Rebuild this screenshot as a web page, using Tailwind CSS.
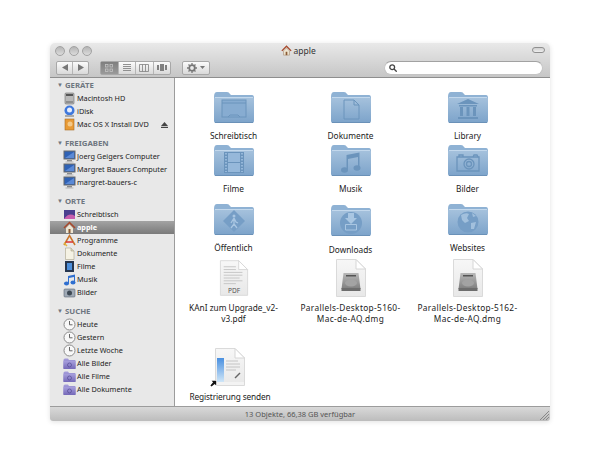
<!DOCTYPE html>
<html lang="de">
<head>
  <meta charset="UTF-8" />
  <title>apple</title>
  <script src="https://cdn.jsdelivr.net/npm/@tailwindcss/browser@4"></script>
</head>
<body class="bg-white w-[600px] h-[465px] overflow-hidden pt-[43px] pl-[50px] font-['Noto_Sans',sans-serif] text-[7.300px] text-[#222] leading-[11px] whitespace-nowrap">

  <!-- shared icon parts -->
  <svg class="absolute w-0 h-0">
    <defs>
      <linearGradient id="fb" x1="0" y1="0" x2="0" y2="1"><stop offset="0" stop-color="#a6c2dd"/><stop offset="1" stop-color="#7ca3ca"/></linearGradient>
      <linearGradient id="pg" x1="0" y1="0" x2="0" y2="1"><stop offset="0" stop-color="#f7f7f7"/><stop offset="1" stop-color="#e8e8e8"/></linearGradient>
      <linearGradient id="dr" x1="0" y1="0" x2="0" y2="1"><stop offset="0" stop-color="#b8b8b8"/><stop offset="1" stop-color="#7f7f7f"/></linearGradient>
      <linearGradient id="sf" x1="0" y1="0" x2="0" y2="1"><stop offset="0" stop-color="#a79fdc"/><stop offset="1" stop-color="#7468b8"/></linearGradient>
      <linearGradient id="bl" x1="0" y1="0" x2="0" y2="1"><stop offset="0" stop-color="#4a90e0"/><stop offset="1" stop-color="#cfe6f8"/></linearGradient>
      <symbol id="folder" viewBox="0 0 42 33">
        <path d="M1 6Q1 1 4 1H14Q16 1 17 3L18 4H39Q41 4 41 7V12H1Z" fill="#8fb2d4"/>
        <path d="M1 8Q1 6 3 6H39Q41 6 41 8V30Q41 32 39 32H3Q1 32 1 30Z" fill="url(#fb)"/>
        <path d="M2 6.500H40" stroke="#c3d8ec" stroke-width="1"/>
        <path d="M2 31.500H40" stroke="#6a91b8" stroke-width="1"/>
      </symbol>
      <symbol id="page" viewBox="0 0 32 40">
        <path d="M1.500 1.500H21L30.500 11V38.500H1.500Z" fill="url(#pg)" stroke="#dadada"/>
        <path d="M21 1.500V11H30.500Z" fill="#fff" stroke="#d6d6d6"/>
      </symbol>
      <symbol id="disk" viewBox="0 0 32 40">
        <use href="#page" width="32" height="40"/>
        <path d="M8.500 15H23.500L25.500 31H6.500Z" fill="url(#dr)"/>
        <rect x="6.500" y="30" width="19" height="3" fill="#6d6d6d"/>
        <rect x="11" y="17" width="10" height="1.500" fill="#555"/>
        <ellipse cx="16" cy="25" rx="6" ry="3.500" fill="#a3a3a3"/>
      </symbol>
      <symbol id="monitor" viewBox="0 0 13 13">
        <rect x="1" y="1" width="11" height="8" fill="#2f62b5" stroke="#6b6b6b"/>
        <path d="M2 8L11 2V8Z" fill="#5b8ad6"/>
        <rect x="4" y="10" width="5" height="1.500" fill="#8a8a8a"/>
        <rect x="2.500" y="11.500" width="8" height="1" fill="#b5b5b5"/>
      </symbol>
      <symbol id="clock" viewBox="0 0 13 13">
        <circle cx="6.500" cy="6.500" r="5.500" fill="#f8f8f8" stroke="#8a8a8a"/>
        <path d="M6.500 3V6.800H9.500" fill="none" stroke="#666"/>
      </symbol>
      <symbol id="smart" viewBox="0 0 13 13">
        <path d="M0.500 3Q0.500 1.500 2 1.500H5L6 3H12Q12.500 3 12.500 4V11.500H0.500Z" fill="url(#sf)"/>
        <rect x="0.500" y="4" width="12" height="8" fill="url(#sf)"/>
        <circle cx="6.500" cy="8" r="2" fill="none" stroke="#5c5299" stroke-width="0.800"/>
      </symbol>
    </defs>
  </svg>

  <div class="w-[500px] h-[378px] flex flex-col rounded-t-[5px] rounded-b-[3px] overflow-hidden shadow-[0_1px_5px_rgba(0,0,0,0.12)]">

    <!-- title bar and toolbar -->
    <div class="relative h-[35px] shrink-0 bg-gradient-to-b from-[#e9e9e9] to-[#c6c6c6] border-b border-[#8e8e8e]">
      <div class="flex items-center gap-[3.500px] pl-[5px] pt-[2px] h-[13px]">
        <span class="w-[10px] h-[10px] rounded-full bg-gradient-to-b from-[#b5b5b5] to-[#dcdcdc] border border-[#a2a2a2]"></span>
        <span class="w-[10px] h-[10px] rounded-full bg-gradient-to-b from-[#b5b5b5] to-[#dcdcdc] border border-[#a2a2a2]"></span>
        <span class="w-[10px] h-[10px] rounded-full bg-gradient-to-b from-[#b5b5b5] to-[#dcdcdc] border border-[#a2a2a2]"></span>
        <div class="flex items-center gap-[2px] ml-[185px] text-[#333]">
          <svg class="w-[11px] h-[11px]" viewBox="0 0 13 13"><path d="M1 7L6.500 1.500L12 7" fill="none" stroke="#a8482b" stroke-width="1.500"/><path d="M3 7L6.500 3.500L10 7V12H3Z" fill="#efe6d2" stroke="#8a6a4a" stroke-width="0.500"/><rect x="5.500" y="8" width="2" height="4" fill="#8a5a35"/></svg>
          <span class="text-[8.500px]">apple</span>
        </div>
        <span class="absolute right-[5px] top-[4px] w-[13px] h-[6px] rounded-full border border-[#8f8f8f] bg-gradient-to-b from-[#cfcfcf] to-[#efefef]"></span>
      </div>

      <div class="flex items-center h-[15px] mt-[4px] pl-[6px]">
        <div class="flex w-[33px] h-[14px] rounded-[2px] border border-[#a8a8a8] bg-gradient-to-b from-[#fbfbfb] to-[#d9d9d9] divide-x divide-[#b5b5b5]">
          <span class="flex-1 flex items-center justify-center"><svg class="w-[6px] h-[7px]" viewBox="0 0 6 7"><path d="M6 0V7L0 3.500Z" fill="#777"/></svg></span>
          <span class="flex-1 flex items-center justify-center"><svg class="w-[6px] h-[7px]" viewBox="0 0 6 7"><path d="M0 0V7L6 3.500Z" fill="#777"/></svg></span>
        </div>
        <div class="flex w-[71px] h-[14px] ml-[11px] rounded-[2px] border border-[#a8a8a8] bg-gradient-to-b from-[#fbfbfb] to-[#d9d9d9] divide-x divide-[#b5b5b5]">
          <span class="flex-1 flex items-center justify-center bg-gradient-to-b from-[#7f7f7f] to-[#9a9a9a]"><svg class="w-[8px] h-[8px]" viewBox="0 0 8 8" fill="none" stroke="#c4c4c4" stroke-width="0.800"><rect x="0.500" y="0.500" width="2.500" height="2.500"/><rect x="5" y="0.500" width="2.500" height="2.500"/><rect x="0.500" y="5" width="2.500" height="2.500"/><rect x="5" y="5" width="2.500" height="2.500"/></svg></span>
          <span class="flex-1 flex items-center justify-center"><svg class="w-[8px] h-[8px]" viewBox="0 0 8 8" stroke="#909090"><path d="M0 0.500H8M0 2.500H8M0 4.500H8M0 6.500H8"/></svg></span>
          <span class="flex-1 flex items-center justify-center"><svg class="w-[10px] h-[8px]" viewBox="0 0 10 8" fill="none" stroke="#808080" stroke-width="0.800"><path d="M0.500 0.500H9.500V7.500H0.500ZM3.500 0.500V7.500M6.500 0.500V7.500"/></svg></span>
          <span class="flex-1 flex items-center justify-center"><svg class="w-[10px] h-[7px]" viewBox="0 0 10 7" fill="#808080"><rect x="3" y="0" width="4" height="7"/><rect x="0" y="1" width="2" height="5"/><rect x="8" y="1" width="2" height="5"/></svg></span>
        </div>
        <div class="flex items-center justify-center gap-[3px] w-[28px] h-[14px] ml-[11px] rounded-[2px] border border-[#a8a8a8] bg-gradient-to-b from-[#fbfbfb] to-[#d9d9d9]">
          <svg class="w-[10px] h-[10px]" viewBox="0 0 10 10"><circle cx="5" cy="5" r="2.800" fill="none" stroke="#777" stroke-width="1.800"/><path d="M5 0V10M0 5H10M1.500 1.500L8.500 8.500M8.500 1.500L1.500 8.500" stroke="#777" stroke-width="1.300" stroke-dasharray="1.800 6.400 1.800 0"/></svg>
          <svg class="w-[5px] h-[3px]" viewBox="0 0 5 3"><path d="M0 0H5L2.500 3Z" fill="#777"/></svg>
        </div>
        <div class="flex items-center w-[159px] h-[14px] ml-[174px] pl-[4px] rounded-full bg-white border border-[#c4c4c4] border-t-[#a2a2a2]">
          <svg class="w-[8px] h-[8px]" viewBox="0 0 8 8" fill="none" stroke="#444" stroke-width="1.300"><circle cx="3.200" cy="3.200" r="2.400"/><path d="M5 5L7.700 7.700"/></svg>
        </div>
      </div>
    </div>

    <div class="flex flex-1 min-h-0">
      <!-- sidebar -->
      <div class="w-[125px] shrink-0 bg-[#e8e8e8] border-r border-[#9c9c9c] pt-[1px] flex flex-col gap-[6px]">
        <div class="flex flex-col">
          <div class="flex items-center h-[13px] pl-[7px] gap-[2px] font-bold text-[7.800px] text-[#6e7680]"><span class="text-[6px]">▼</span>GERÄTE</div>
          <div class="flex items-center h-[13px] pl-[13px] gap-[1px]"><svg class="w-[13px] h-[13px]" viewBox="0 0 13 13"><rect x="2" y="1" width="9" height="11" rx="1" fill="#b9b9b9" stroke="#6c6c6c" stroke-width="0.600"/><rect x="3" y="2" width="7" height="2" fill="#555"/><rect x="3" y="9" width="7" height="2" fill="#8e8e8e"/></svg>Macintosh HD</div>
          <div class="flex items-center h-[13px] pl-[13px] gap-[1px]"><svg class="w-[13px] h-[13px]" viewBox="0 0 13 13"><circle cx="6.500" cy="5.500" r="5" fill="#3f78dc"/><circle cx="6.500" cy="5" r="2.500" fill="#e8eefc"/><rect x="2" y="10" width="9" height="2" fill="#a8a8a8"/></svg>iDisk</div>
          <div class="flex items-center h-[13px] pl-[13px] pr-[6px] gap-[1px]"><svg class="w-[13px] h-[13px]" viewBox="0 0 13 13"><rect x="2" y="1" width="9" height="11" fill="#e89a35" stroke="#a86c22" stroke-width="0.600"/><circle cx="7" cy="6" r="2.500" fill="#f5c987"/></svg><span class="flex-1">Mac OS X Install DVD</span><svg class="w-[7px] h-[6px]" viewBox="0 0 7 6" fill="#444"><path d="M3.500 0L7 4H0Z"/><rect y="4.800" width="7" height="1.200"/></svg></div>
        </div>
        <div class="flex flex-col">
          <div class="flex items-center h-[13px] pl-[7px] gap-[2px] font-bold text-[7.800px] text-[#6e7680]"><span class="text-[6px]">▼</span>FREIGABEN</div>
          <div class="flex items-center h-[13px] pl-[13px] gap-[1px]"><svg class="w-[13px] h-[13px]"><use href="#monitor"/></svg>Joerg Geigers Computer</div>
          <div class="flex items-center h-[13px] pl-[13px] gap-[1px]"><svg class="w-[13px] h-[13px]"><use href="#monitor"/></svg>Margret Bauers Computer</div>
          <div class="flex items-center h-[13px] pl-[13px] gap-[1px]"><svg class="w-[13px] h-[13px]"><use href="#monitor"/></svg>margret-bauers-c</div>
        </div>
        <div class="flex flex-col">
          <div class="flex items-center h-[13px] pl-[7px] gap-[2px] font-bold text-[7.800px] text-[#6e7680]"><span class="text-[6px]">▼</span>ORTE</div>
          <div class="flex items-center h-[13px] pl-[13px] gap-[1px]"><svg class="w-[13px] h-[13px]" viewBox="0 0 13 13"><rect x="1" y="2" width="11" height="9" fill="#4a3f8f"/><path d="M1 11Q6 4 12 8V11Z" fill="#c85fae"/></svg>Schreibtisch</div>
          <div class="flex items-center h-[13px] pl-[13px] gap-[1px] bg-gradient-to-b from-[#a3a3a3] to-[#7a7a7a] font-bold text-white"><svg class="w-[13px] h-[13px]" viewBox="0 0 13 13"><path d="M1 7L6.500 1.500L12 7" fill="none" stroke="#a8482b" stroke-width="1.500"/><path d="M3 7L6.500 3.500L10 7V12H3Z" fill="#efe6d2"/><rect x="5.500" y="8" width="2" height="4" fill="#8a5a35"/></svg>apple</div>
          <div class="flex items-center h-[13px] pl-[13px] gap-[1px]"><svg class="w-[13px] h-[13px]" viewBox="0 0 13 13" fill="none" stroke-width="1.500"><path d="M1 11L6.500 1.500L12 11" stroke="#c9752b"/><path d="M3 8H10" stroke="#d33"/><path d="M1 9L4 12" stroke="#e3b53a"/></svg>Programme</div>
          <div class="flex items-center h-[13px] pl-[13px] gap-[1px]"><svg class="w-[13px] h-[13px]" viewBox="0 0 13 13"><path d="M2.500 1H8L11 4V12.500H2.500Z" fill="#f5f2e4" stroke="#a9a38a" stroke-width="0.600"/><path d="M8 1V4H11" fill="#d9d4bc" stroke="#a9a38a" stroke-width="0.600"/></svg>Dokumente</div>
          <div class="flex items-center h-[13px] pl-[13px] gap-[1px]"><svg class="w-[13px] h-[13px]" viewBox="0 0 13 13"><rect x="2" y="1" width="9" height="11" fill="#26364f"/><rect x="4" y="3" width="5" height="7" fill="#4d8fdb"/></svg>Filme</div>
          <div class="flex items-center h-[13px] pl-[13px] gap-[1px]"><svg class="w-[13px] h-[13px]" viewBox="0 0 13 13" fill="#2f6fd0"><ellipse cx="3.500" cy="10.500" rx="2.500" ry="2"/><ellipse cx="10" cy="9.500" rx="2.500" ry="2"/><path d="M5 10V3L12 1.500V9.500H11V4L6 5V10.500Z"/></svg>Musik</div>
          <div class="flex items-center h-[13px] pl-[13px] gap-[1px]"><svg class="w-[13px] h-[13px]" viewBox="0 0 13 13"><rect x="1" y="3" width="11" height="8" rx="1" fill="#9fa9b5" stroke="#5c6672" stroke-width="0.600"/><circle cx="6.500" cy="7" r="2.500" fill="#3e4954"/></svg>Bilder</div>
        </div>
        <div class="flex flex-col">
          <div class="flex items-center h-[13px] pl-[7px] gap-[2px] font-bold text-[7.800px] text-[#6e7680]"><span class="text-[6px]">▼</span>SUCHE</div>
          <div class="flex items-center h-[13px] pl-[13px] gap-[1px]"><svg class="w-[13px] h-[13px]"><use href="#clock"/></svg>Heute</div>
          <div class="flex items-center h-[13px] pl-[13px] gap-[1px]"><svg class="w-[13px] h-[13px]"><use href="#clock"/></svg>Gestern</div>
          <div class="flex items-center h-[13px] pl-[13px] gap-[1px]"><svg class="w-[13px] h-[13px]"><use href="#clock"/></svg>Letzte Woche</div>
          <div class="flex items-center h-[13px] pl-[13px] gap-[1px]"><svg class="w-[13px] h-[13px]"><use href="#smart"/></svg>Alle Bilder</div>
          <div class="flex items-center h-[13px] pl-[13px] gap-[1px]"><svg class="w-[13px] h-[13px]"><use href="#smart"/></svg>Alle Filme</div>
          <div class="flex items-center h-[13px] pl-[13px] gap-[1px]"><svg class="w-[13px] h-[13px]"><use href="#smart"/></svg>Alle Dokumente</div>
        </div>
      </div>

      <!-- icon grid -->
      <div class="flex-1 bg-white pt-[13px] text-[8.300px] grid grid-cols-[repeat(3,117px)] grid-rows-[53px_59px_55px_89px_59px] text-center">
        <div class="flex flex-col items-center gap-[6px]">
          <svg class="w-[42px] h-[33px] shrink-0" viewBox="0 0 42 33"><use href="#folder" width="42" height="33"/><g fill="none" stroke="#6b94bc"><rect x="9" y="9" width="24" height="17" fill="#87acd1"/><path d="M9 12H33M15 26L17 24H25L27 26"/></g></svg>
          <span>Schreibtisch</span>
        </div>
        <div class="flex flex-col items-center gap-[6px]">
          <svg class="w-[42px] h-[33px] shrink-0" viewBox="0 0 42 33"><use href="#folder" width="42" height="33"/><path d="M14 9H24L29 14V28H14ZM24 9V14H29" fill="none" stroke="#6b94bc"/></svg>
          <span>Dokumente</span>
        </div>
        <div class="flex flex-col items-center gap-[6px]">
          <svg class="w-[42px] h-[33px] shrink-0" viewBox="0 0 42 33"><use href="#folder" width="42" height="33"/><path d="M21 8L32 13H10ZM12 14H30V15.500H12ZM13 16H16V25H13ZM19.500 16H22.500V25H19.500ZM26 16H29V25H26ZM11 26H31V28H11Z" fill="#6b94bc"/></svg>
          <span>Library</span>
        </div>

        <div class="flex flex-col items-center gap-[6px]">
          <svg class="w-[42px] h-[33px] shrink-0" viewBox="0 0 42 33"><use href="#folder" width="42" height="33"/><rect x="11" y="8" width="20" height="21" fill="#6b94bc"/><rect x="15" y="9" width="12" height="9" fill="#96b8da"/><rect x="15" y="19" width="12" height="9" fill="#96b8da"/><path d="M13 9V28M29 9V28" stroke="#96b8da" stroke-width="2" stroke-dasharray="1.500 1.500"/></svg>
          <span>Filme</span>
        </div>
        <div class="flex flex-col items-center gap-[6px]">
          <svg class="w-[42px] h-[33px] shrink-0" viewBox="0 0 42 33"><use href="#folder" width="42" height="33"/><g fill="#6b94bc"><ellipse cx="14.500" cy="26" rx="3.500" ry="2.800"/><ellipse cx="27" cy="24" rx="3.500" ry="2.800"/><path d="M16.500 26V11L29.500 8.500V24H28V13L18 15V26Z"/></g></svg>
          <span>Musik</span>
        </div>
        <div class="flex flex-col items-center gap-[6px]">
          <svg class="w-[42px] h-[33px] shrink-0" viewBox="0 0 42 33"><use href="#folder" width="42" height="33"/><g fill="none" stroke="#6b94bc" stroke-width="1.300"><path d="M10 13H32V27H10Z"/><path d="M12 13V11H16V13M26 13L27 11H30L31 13"/><circle cx="22" cy="20" r="5"/><circle cx="22" cy="20" r="2.500"/></g></svg>
          <span>Bilder</span>
        </div>

        <div class="flex flex-col items-center gap-[6px]">
          <svg class="w-[42px] h-[33px] shrink-0" viewBox="0 0 42 33"><use href="#folder" width="42" height="33"/><path d="M21 7L32 18L21 29L10 18Z" fill="#769ec6"/><circle cx="21" cy="13" r="1.500" fill="#a9c6e2"/><path d="M21 15L18 20M21 15L23 19L25 20M21 15V21L18 25M21 21L24 25" fill="none" stroke="#a9c6e2" stroke-width="1.300"/></svg>
          <span>Öffentlich</span>
        </div>
        <div class="flex flex-col items-center gap-[7px] pt-px">
          <svg class="w-[42px] h-[33px] shrink-0" viewBox="0 0 42 33"><use href="#folder" width="42" height="33"/><circle cx="21" cy="19" r="11" fill="#769ec6"/><path d="M18 9H24V14H27L21 20L15 14H18Z" fill="#a9c6e2"/><path d="M15.500 20.500H26.500V26H15.500Z" fill="none" stroke="#a9c6e2"/></svg>
          <span>Downloads</span>
        </div>
        <div class="flex flex-col items-center gap-[6px]">
          <svg class="w-[42px] h-[33px] shrink-0" viewBox="0 0 42 33"><use href="#folder" width="42" height="33"/><circle cx="21" cy="19" r="10.500" fill="#769ec6"/><path d="M14 12Q19 9 22 11L20 15L22 18L18 20L15 17ZM24 20L29 19L27 26L24 26ZM25 10L29 13L26 14Z" fill="#a2c0dd"/></svg>
          <span>Websites</span>
        </div>

        <div class="flex flex-col items-center gap-[4px]">
          <svg class="w-[30px] h-[40px] shrink-0" viewBox="0 0 32 40"><use href="#page" width="32" height="40"/><path d="M5 8H18M5 11H18M5 14H25M5 17H25M5 20H22M5 23H25M5 26H18" stroke="#c4c4c4"/><text x="16" y="36" text-anchor="middle" font-size="7" fill="#555" font-family="Noto Sans">PDF</text></svg>
          <span>KAnI zum Upgrade_v2-<br>v3.pdf</span>
        </div>
        <div class="flex flex-col items-center gap-[4px]">
          <svg class="w-[32px] h-[40px] shrink-0"><use href="#disk" width="32" height="40"/></svg>
          <span class="tracking-[0.350px]">Parallels-Desktop-5160-<br>Mac-de-AQ.dmg</span>
        </div>
        <div class="flex flex-col items-center gap-[4px]">
          <svg class="w-[32px] h-[40px] shrink-0"><use href="#disk" width="32" height="40"/></svg>
          <span class="tracking-[0.350px]">Parallels-Desktop-5162-<br>Mac-de-AQ.dmg</span>
        </div>

        <div class="relative flex flex-col items-center gap-[4px] pr-[7px]">
          <svg class="w-[32px] h-[40px] shrink-0" viewBox="0 0 32 40"><use href="#page" width="32" height="40"/><rect x="3" y="11" width="7" height="24" fill="url(#bl)"/><path d="M12 14H24M12 17H26M12 20H26M12 23H22" stroke="#c4c4c4"/><path d="M21 31L26 26" stroke="#666" stroke-width="1.500"/><rect x="2" y="35" width="28" height="3" fill="#f3f3f3"/></svg>
          <svg class="absolute left-[35px] top-[33px] w-[7px] h-[7px]" viewBox="0 0 9 9"><rect width="9" height="9" rx="1" fill="#fff"/><path d="M2 1H8V7L6 5L2 8.500L0.500 7L4 3Z" fill="#111"/></svg>
          <span class="tracking-[-0.150px]">Registrierung senden</span>
        </div>
      </div>
    </div>

    <!-- status bar -->
    <div class="relative h-[15px] shrink-0 flex items-center justify-center bg-gradient-to-b from-[#d9d9d9] to-[#bcbcbc] border-t border-[#9c9c9c] text-[7.500px] text-[#555]">
      13 Objekte, 66,38 GB verfügbar
      <svg class="absolute right-[1px] bottom-[1px] w-[10px] h-[10px]" viewBox="0 0 10 10" stroke="#888"><path d="M1 10L10 1M4 10L10 4M7 10L10 7"/></svg>
    </div>
  </div>
</body>
</html>
